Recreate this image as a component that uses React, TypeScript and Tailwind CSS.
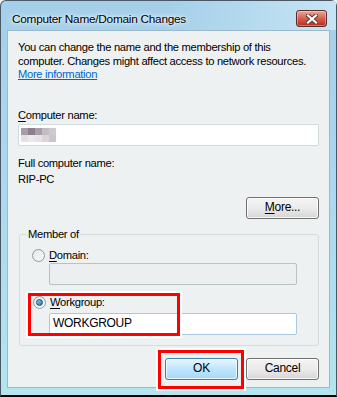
const font = { fontFamily: '"Liberation Sans", Arial, sans-serif' }

function Radio({ checked }: { checked?: boolean }) {
  return (
    <span className="flex h-[13px] w-[13px] shrink-0 items-center justify-center rounded-full border border-[#8e9ba5] bg-gradient-to-br from-[#e4e6e8] to-[#f8f9fa]">
      {checked && (
        <span className="h-[7px] w-[7px] rounded-full border border-[#1f4e79] bg-gradient-to-br from-[#8ecbf0] to-[#2a6fb0]" />
      )}
    </span>
  )
}

function Button({ label, hot, primary }: { label: string; hot?: number; primary?: boolean }) {
  const chars = label.split('')
  return (
    <button
      className={
        primary
          ? 'flex h-[22px] w-[73px] items-center justify-center rounded-[3px] border border-[#3c7fb1] bg-gradient-to-b from-[#eaf6fd] via-[#bee6fd] to-[#a7d9f5] text-[12px] text-black shadow-[inset_0_0_0_1px_rgba(255,255,255,0.7)]'
          : 'flex h-[22px] w-[73px] items-center justify-center rounded-[3px] border border-[#707070] bg-gradient-to-b from-[#f4f4f4] via-[#ebebeb] to-[#d6d6d6] text-[12px] text-black shadow-[inset_0_0_0_1px_rgba(255,255,255,0.8)]'
      }
    >
      {chars.map((c, i) => (
        <span key={i} className={i === hot ? 'underline underline-offset-2' : ''}>
          {c}
        </span>
      ))}
    </button>
  )
}

function RedBox({ className }: { className: string }) {
  return (
    <div
      className={
        'pointer-events-none absolute border-[3px] border-[#ff0000] shadow-[0_0_0_2px_#ffffff] ' + className
      }
    />
  )
}

export default function App() {
  const blur = ['#a89ca9', '#8d7f8e', '#a99ea9', '#c3bcc3', '#cfcacf', '#e3e0e3', '#ebe9eb', '#e6e3e6', '#d9d5d9', '#c9c5c9']

  return (
    <div className="h-[397px] w-[337px] bg-[#f0f0f0]" style={font}>
      <div className="flex h-full w-full flex-col rounded-t-[6px] border border-[#4a5866] border-b-[2px] border-b-black bg-gradient-to-b from-[#a5cfe9] via-[#acd9ef] to-[#b3e5ef]">
        {/* title bar */}
        <div className="flex h-[29px] shrink-0 items-start justify-between bg-gradient-to-r from-transparent via-transparent to-[#c6e5f4] pl-[11px] pr-[9px]">
          <span className="mt-[10px] text-[11.8px] leading-[16px] tracking-[-0.25px] text-black [text-shadow:0_0_6px_#ffffff,0_0_3px_#ffffff]">
            Computer Name/Domain Changes
          </span>
          <div className="mt-[9px] flex h-[17px] w-[31px] items-center justify-center rounded-[3px] border border-[#5b2b2b] bg-gradient-to-b from-[#e9a99b] via-[#d2604e] to-[#b42a1a] shadow-[inset_0_0_0_1px_rgba(255,255,255,0.35)]">
            <svg width="12" height="10" viewBox="0 0 12 10">
              <path d="M2 1.5 L10 8.5 M10 1.5 L2 8.5" stroke="#5a3434" strokeWidth="4" strokeLinecap="square" />
              <path d="M2 1.5 L10 8.5 M10 1.5 L2 8.5" stroke="#ffffff" strokeWidth="2.2" strokeLinecap="square" />
            </svg>
          </div>
        </div>

        {/* client area */}
        <div className="mx-[6px] flex h-[358px] shrink-0 flex-col border border-[#9cb9cc] bg-[#edf1f2] px-[10px] text-[11.2px] leading-[13.5px] tracking-[-0.3px] text-black">
          <p className="mt-[10px]">
            You can change the name and the membership of this
            <br />
            computer. Changes might affect access to network resources.
            <br />
            <span className="text-[#0066cc] underline">More information</span>
          </p>

          <div className="mt-[27px]">
            <span className="underline underline-offset-2">C</span>omputer name:
          </div>
          <div className="mt-[2px] flex h-[22px] items-center rounded-[2px] border border-[#d3dadd] bg-white pl-[2px]">
            <div className="grid grid-cols-5">
              {blur.map((c, i) => (
                <span key={i} className="h-[7px] w-[7px]" style={{ backgroundColor: c }} />
              ))}
            </div>
          </div>

          <div className="mt-[11px]">Full computer name:</div>
          <div className="mt-[2px]">RIP-PC</div>

          <div className="mt-[11px] flex justify-end">
            <Button label="More..." hot={0} />
          </div>

          <fieldset className="ml-[1px] mt-[9px] rounded-[3px] border border-[#d5dde1] px-[7px] pb-[10px]">
            <legend className="px-[1px]">Member of</legend>
            <div className="mt-[7px] flex items-center gap-[4px] pl-[5px]">
              <Radio />
              <span>
                <span className="underline underline-offset-2">D</span>omain:
              </span>
            </div>
            <div className="ml-[22px] mr-[14px] mt-[1px] h-[22px] rounded-[2px] border border-[#b9c1c5] bg-[#eceeef]" />

            <div className="relative mt-[11px]">
              <div className="flex items-center gap-[4px] pl-[6px]">
                <Radio checked />
                <span>
                  <span className="underline underline-offset-2">W</span>orkgroup:
                </span>
              </div>
              <div className="ml-[22px] mr-[14px] mt-[3px] flex h-[22px] items-center rounded-[2px] border border-[#a9c9e0] bg-white pl-[3px] text-[12px]">
                WORKGROUP
              </div>
              <RedBox className="-top-[3px] left-[1px] h-[43px] w-[152px]" />
            </div>
          </fieldset>

          <div className="mt-[12px] flex justify-end gap-[8px]">
            <div className="relative">
              <Button label="OK" primary />
              <RedBox className="-left-[7px] -top-[8px] -right-[6px] -bottom-[9px]" />
            </div>
            <Button label="Cancel" />
          </div>
        </div>
      </div>
    </div>
  )
}
